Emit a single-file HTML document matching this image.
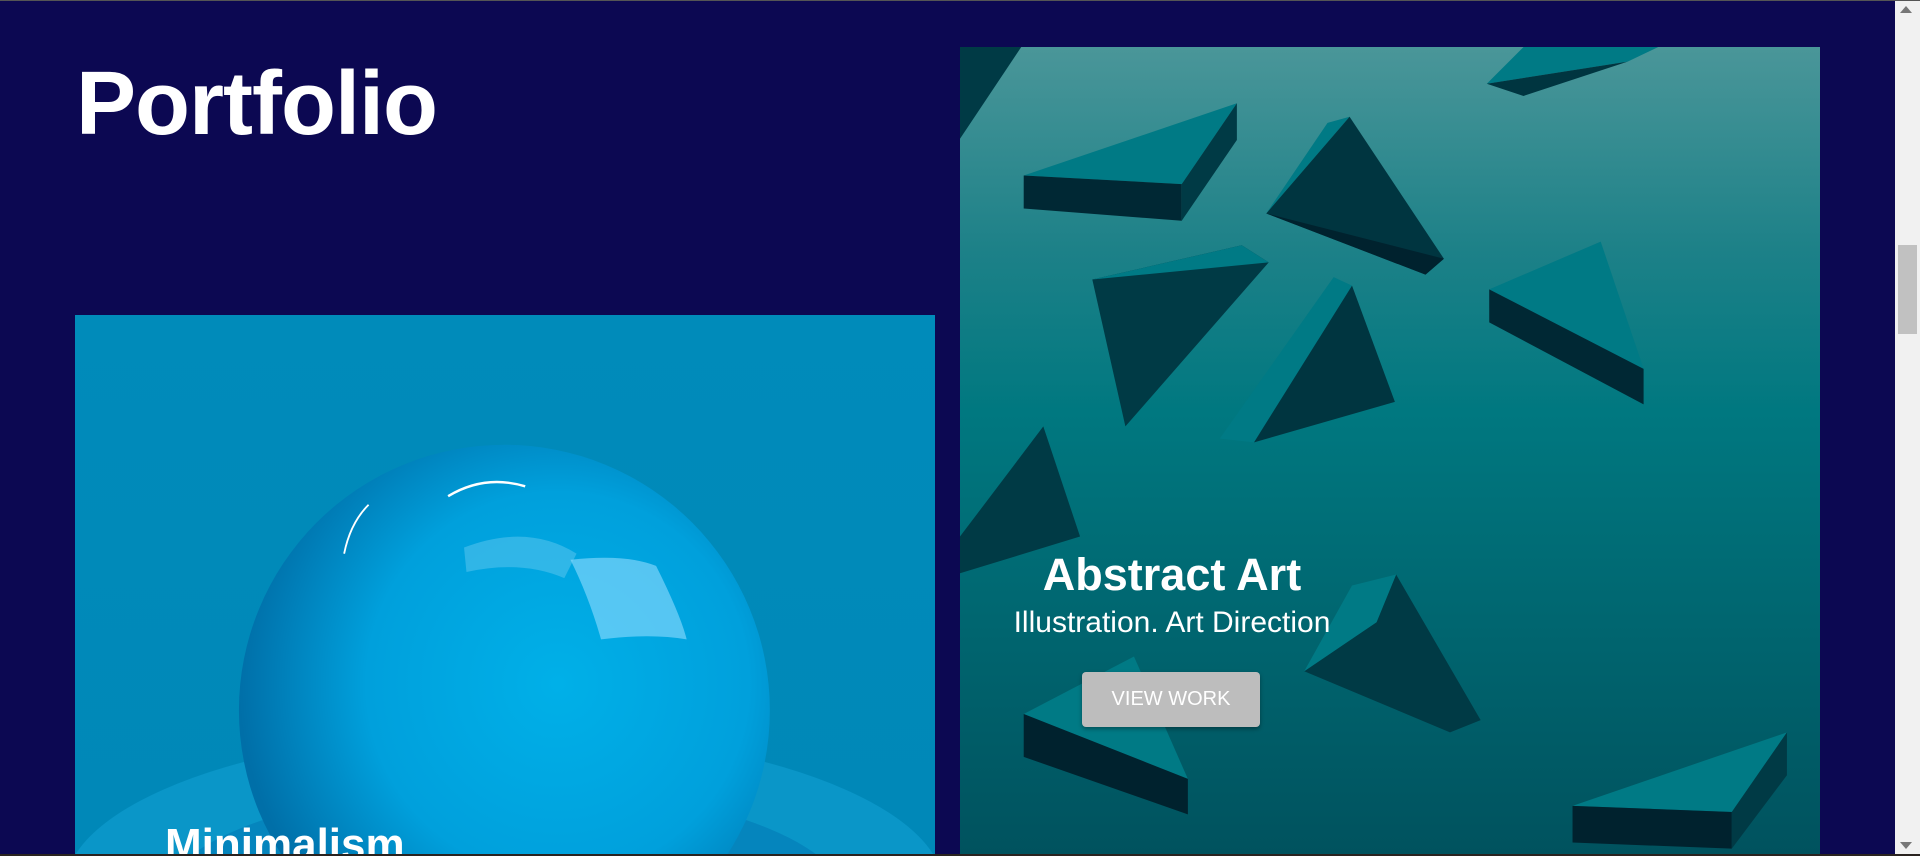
<!DOCTYPE html>
<html><head><meta charset="utf-8"><style>
html,body{margin:0;padding:0;width:1920px;height:856px;overflow:hidden;background:#0c0852;font-family:"Liberation Sans",sans-serif}
.topline{position:absolute;left:0;top:0;width:1920px;height:1px;background:#555}
.botline{position:absolute;left:0;top:854px;width:1920px;height:2px;background:#2a2320}
h1{position:absolute;left:76px;top:49px;margin:0;color:#fff;font-size:90px;font-weight:bold;letter-spacing:-1px;line-height:110px}
.card{position:absolute;overflow:hidden}
.sb{position:absolute;left:1895px;top:1px;width:25px;height:853px;background:#f1f1f1}
.thumb{position:absolute;left:1898px;top:245px;width:19px;height:89px;background:#c1c1c1}
.t{position:absolute;color:#fff;white-space:nowrap}
</style></head><body>
<div class="topline"></div>
<h1>Portfolio</h1>

<div class="card" style="left:75px;top:315px;width:860px;height:541px">
<svg width="860" height="541" viewBox="0 0 703 442" preserveAspectRatio="none">
<defs>
<radialGradient id="sp" cx="0.6" cy="0.45" r="0.6">
<stop offset="0" stop-color="#00b0e8"/><stop offset="0.6" stop-color="#00a0dc"/><stop offset="1" stop-color="#006fa8"/></radialGradient>
<linearGradient id="bg1" x1="0" y1="0" x2="0" y2="1"><stop offset="0" stop-color="#008bba"/><stop offset="1" stop-color="#0088b8"/></linearGradient>
</defs>
<rect width="703" height="442" fill="url(#bg1)"/>
<ellipse cx="351" cy="470" rx="360" ry="130" fill="#0a96c8"/>
<ellipse cx="351" cy="480" rx="280" ry="95" fill="#0585bd"/>
<ellipse cx="351" cy="490" rx="210" ry="70" fill="#005f98"/>
<circle cx="351" cy="323" r="217" fill="url(#sp)"/>
<path d="M318 190 Q370 170 410 195 L400 215 Q365 200 320 210Z" fill="#60c8f0" opacity="0.5"/>
<path d="M405 200 Q450 195 475 205 Q495 245 500 265 Q470 260 430 265 Q420 230 405 200Z" fill="#8fdcff" opacity="0.6"/>
<path d="M305 148 Q335 130 368 140" stroke="#fff" stroke-width="2" fill="none"/>
<path d="M220 195 Q225 170 240 155" stroke="#fff" stroke-width="1.5" fill="none"/>
</svg>
<div class="t" style="left:90px;top:500px;font-size:44px;font-weight:bold;line-height:60px">Minimalism</div>
</div>

<div class="card" style="left:960px;top:47px;width:860px;height:809px">
<svg width="860" height="809" viewBox="0 0 702 661" preserveAspectRatio="none">
<defs><linearGradient id="bg2" x1="0" y1="0" x2="0" y2="1">
<stop offset="0" stop-color="#4a9699"/><stop offset="0.25" stop-color="#1d8188"/><stop offset="0.45" stop-color="#007880"/><stop offset="1" stop-color="#00525e"/></linearGradient></defs>
<rect width="702" height="661" fill="url(#bg2)"/>
<g>
<polygon points="0,0 50,0 0,75" fill="#003a45"/>
<polygon points="52,105 226,46 181,112" fill="#007a85"/><polygon points="52,105 181,112 181,142 52,132" fill="#002834"/><polygon points="181,112 226,46 226,76 181,142" fill="#003a45"/>
<polygon points="250,136 318,57 300,62" fill="#007a85"/><polygon points="250,136 318,57 395,173 380,186" fill="#003540"/><polygon points="250,136 380,186 395,173" fill="#00222e"/>
<polygon points="430,30 460,0 570,0 545,12" fill="#007a85"/><polygon points="430,30 545,12 460,40" fill="#003540"/>
<polygon points="108,190 230,162 252,176 135,310" fill="#003a45"/><polygon points="108,190 230,162 252,176" fill="#007a85"/>
<polygon points="212,320 305,188 320,195 240,323" fill="#007a85"/><polygon points="240,323 320,195 355,290" fill="#003540"/>
<polygon points="432,198 523,159 558,263" fill="#007a85"/><polygon points="432,198 558,263 558,292 432,225" fill="#002834"/>
<polygon points="0,400 68,310 98,400 0,430" fill="#003a45"/>
<polygon points="281,510 340,470 356,431 425,550 400,560" fill="#003a45"/><polygon points="281,510 340,470 356,431 320,440" fill="#007a85"/>
<polygon points="52,545 142,498 186,598" fill="#007a85"/><polygon points="52,545 186,598 186,627 52,580" fill="#00222e"/>
<polygon points="500,620 675,560 630,625" fill="#007a85"/><polygon points="500,620 630,625 630,655 500,650" fill="#00222e"/><polygon points="630,625 675,560 675,595 630,655" fill="#003a45"/>
</g>
</svg>
<div class="t" style="left:0;width:424px;text-align:center;top:502px;font-size:45px;font-weight:bold">Abstract Art</div>
<div class="t" style="left:0;width:424px;text-align:center;top:559px;font-size:30px">Illustration. Art Direction</div>
<div style="position:absolute;left:122px;top:625px;width:178px;height:55px;background:#bdbdbd;border-radius:4px;box-shadow:0 2px 4px rgba(0,0,0,.35);color:#fff;font-size:20px;line-height:55px;text-align:center">VIEW WORK</div>
</div>

<div class="sb"></div><div class="thumb"></div>
<div style="position:absolute;left:1900px;top:6px;width:0;height:0;border-left:6px solid transparent;border-right:6px solid transparent;border-bottom:7px solid #777"></div>
<div style="position:absolute;left:1900px;top:842px;width:0;height:0;border-left:6px solid transparent;border-right:6px solid transparent;border-top:7px solid #777"></div>
<div class="botline"></div>
</body></html>
